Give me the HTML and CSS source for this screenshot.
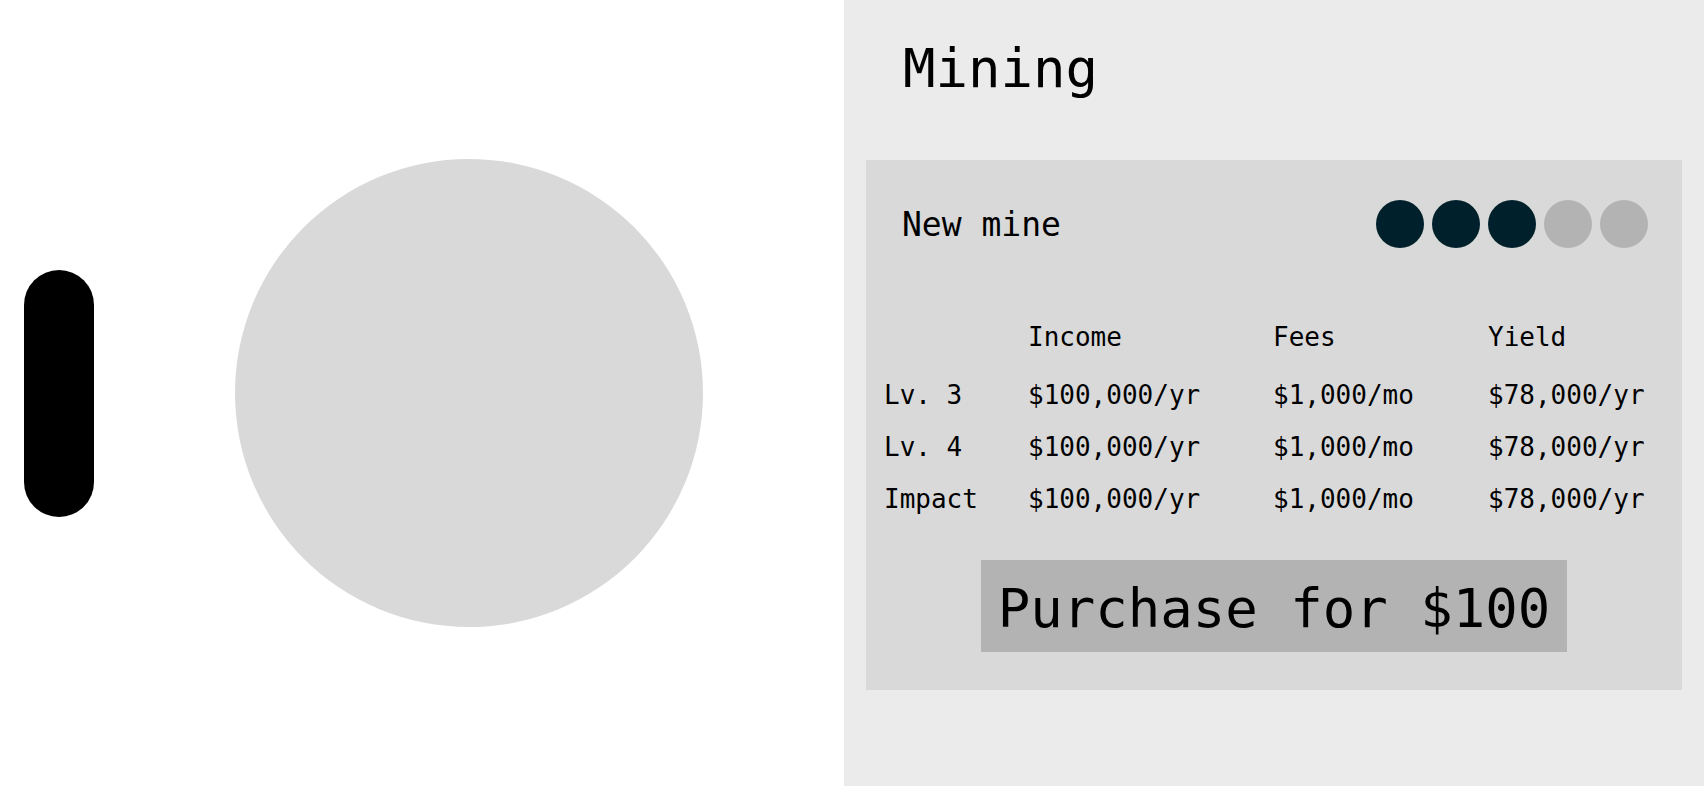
FILE: index.html
```html
<!DOCTYPE html>
<html lang="en">
<head>
<meta charset="UTF-8" />
<meta name="viewport" content="width=device-width, initial-scale=1" />
<title>Mining</title>
<link rel="stylesheet" href="styles.css">
</head>
<body>
  <div class="stage">
    <div class="lever"></div>
    <div class="planet"></div>
  </div>
  <aside class="panel">
    <h1>Mining</h1>
    <section class="card">
      <div class="card-head">
        <span class="card-title">New mine</span>
        <div class="levels">
          <span class="dot on"></span>
          <span class="dot on"></span>
          <span class="dot on"></span>
          <span class="dot"></span>
          <span class="dot"></span>
        </div>
      </div>
      <div class="stats">
        <div class="row head">
          <span></span><span>Income</span><span>Fees</span><span>Yield</span>
        </div>
        <div class="row">
          <span>Lv. 3</span><span>$100,000/yr</span><span>$1,000/mo</span><span>$78,000/yr</span>
        </div>
        <div class="row">
          <span>Lv. 4</span><span>$100,000/yr</span><span>$1,000/mo</span><span>$78,000/yr</span>
        </div>
        <div class="row">
          <span>Impact</span><span>$100,000/yr</span><span>$1,000/mo</span><span>$78,000/yr</span>
        </div>
      </div>
      <div class="buy">
        <button>Purchase for $100</button>
      </div>
    </section>
  </aside>
</body>
</html>
```

FILE: styles.css
```css
:root {
  --panel-bg: #ebebeb;
  --card-bg: #d9d9d9;
  --muted: #b3b3b3;
  --dark: #00202c;
  --text-color: #000000;
}
body {
  margin: 0;
  height: 100vh;
  display: flex;
  font-family: 'DejaVu Sans Mono', monospace;
  color: var(--text-color);
  background: #ffffff;
}
.stage {
  width: 844px;
  flex-shrink: 0;
  display: flex;
  align-items: center;
  padding-left: 24px;
  gap: 141px;
  box-sizing: border-box;
}
.lever {
  width: 70px;
  height: 247px;
  border-radius: 35px;
  background: #000000;
}
.planet {
  width: 468px;
  height: 468px;
  border-radius: 50%;
  background: var(--card-bg);
}
.panel {
  flex: 1;
  background: var(--panel-bg);
  padding: 0 22px;
}
h1 {
  font-size: 54px;
  font-weight: normal;
  line-height: 1;
  margin: 42px 0 64px 37px;
}
.card {
  background: var(--card-bg);
  padding: 40px 0 38px;
}
.card-head {
  display: flex;
  justify-content: space-between;
  align-items: center;
  padding: 0 34px 0 36px;
}
.card-title {
  font-size: 33px;
  line-height: 1;
}
.levels {
  display: flex;
  gap: 8px;
}
.dot {
  width: 48px;
  height: 48px;
  border-radius: 50%;
  background: var(--muted);
}
.dot.on {
  background: var(--dark);
}
.stats {
  margin-top: 63px;
  padding-left: 18px;
  font-size: 26px;
  line-height: 52px;
}
.row {
  display: grid;
  grid-template-columns: 144px 245px 215px auto;
  white-space: nowrap;
}
.row.head {
  margin-bottom: 6px;
}
.buy {
  margin-top: 35px;
  text-align: center;
}
button {
  font-family: inherit;
  font-size: 54px;
  line-height: 1;
  color: var(--text-color);
  background: var(--muted);
  border: none;
  border-radius: 0;
  padding: 22px 17px 16px;
  cursor: pointer;
}
```
